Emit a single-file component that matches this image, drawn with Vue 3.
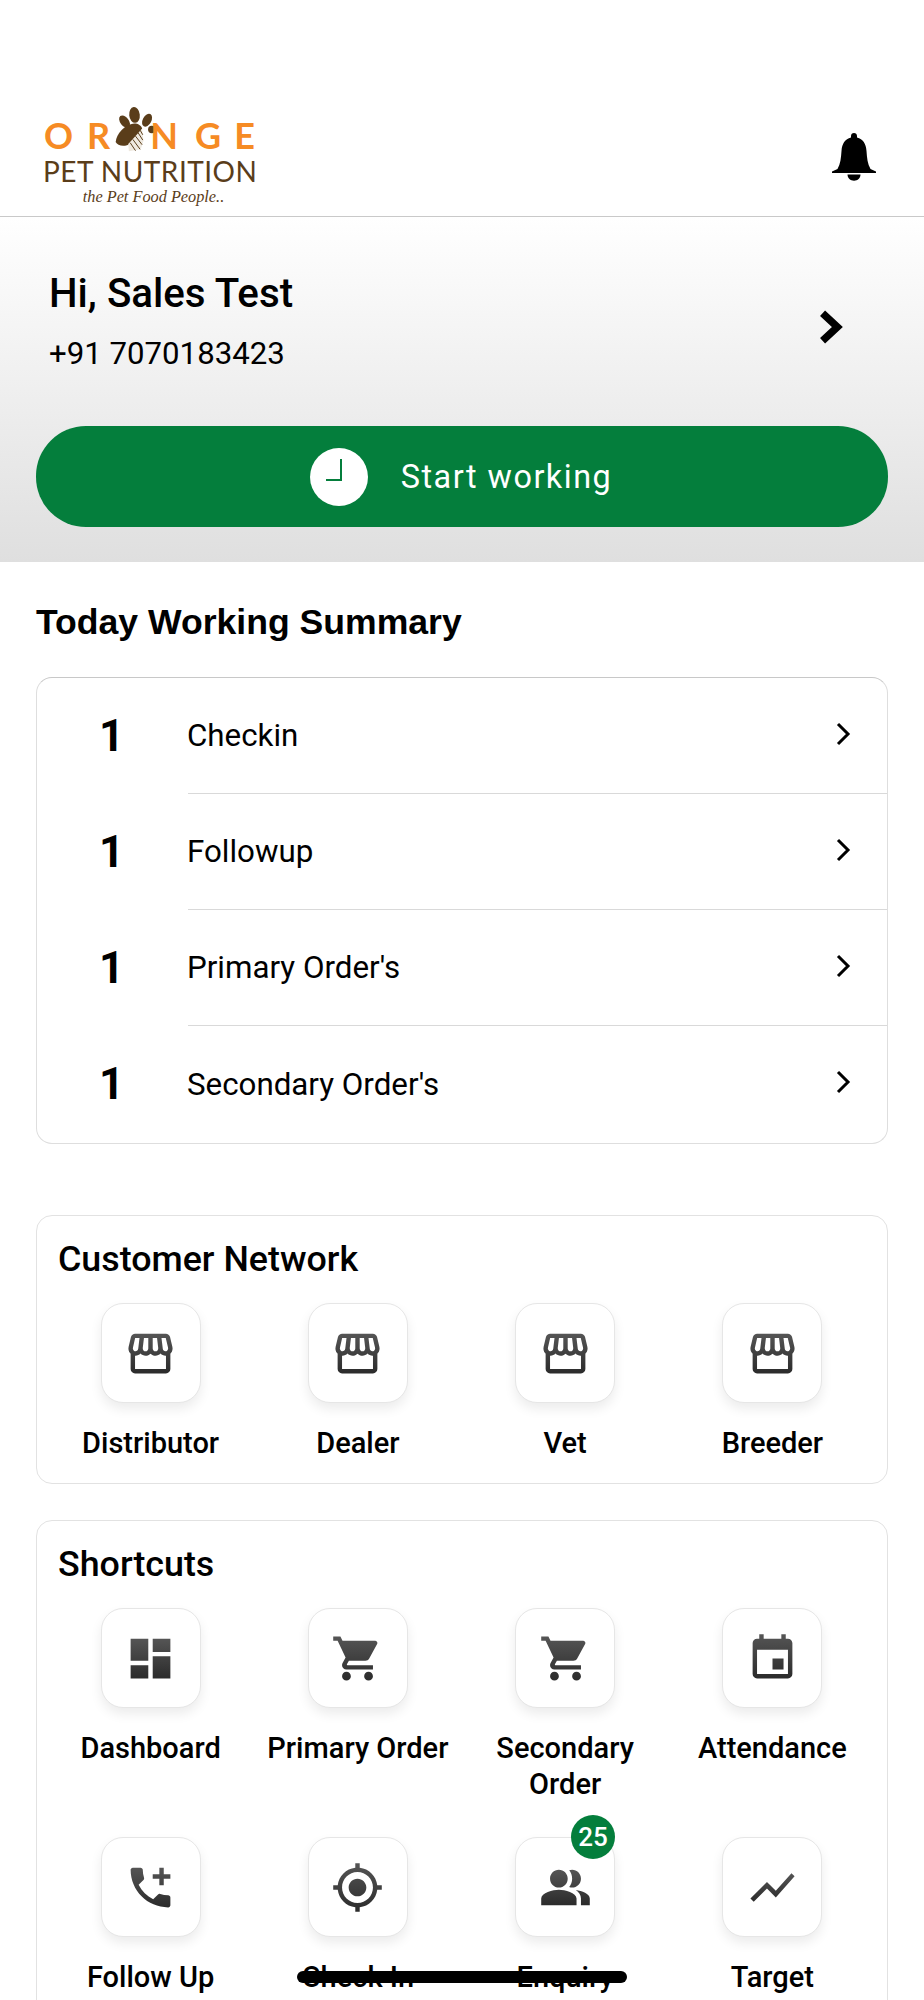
<template>
  <div class="page">
    <svg class="defs" width="0" height="0" aria-hidden="true">
      <defs>
        <linearGradient id="iconFill" x1="0" y1="0" x2="0" y2="1">
          <stop offset="0" stop-color="#555555" />
          <stop offset="1" stop-color="#2b2b2b" />
        </linearGradient>
      </defs>
    </svg>

    <header class="topbar">
      <div class="logo">
        <div class="logo-orange">
          <span class="l-o">O</span>
          <span>R</span>
          <svg class="paw" viewBox="0 0 130 145">
            <ellipse cx="65" cy="30" rx="16" ry="24" fill="#5a3d1a" transform="rotate(-6 65 30)" />
            <ellipse cx="35" cy="50" rx="13" ry="21" fill="#5a3d1a" transform="rotate(-38 35 50)" />
            <ellipse cx="103" cy="46" rx="13" ry="21" fill="#5a3d1a" transform="rotate(28 103 46)" />
            <ellipse cx="117" cy="74" rx="11" ry="11" fill="#5a3d1a" />
            <path d="M64 56 C76 56 86 62 88 72 L54 116 C36 128 14 124 8 112 C10 88 36 58 64 56 Z" fill="#5a3d1a" />
            <path d="M88 72 L92 108 L84 134 L48 140 L46 118 Z" fill="#efe9e0" />
            <path d="M82 76 L90 90 M76 84 L90 106 M68 94 L88 120 M60 104 L82 134 M52 114 L68 138" stroke="#5a3d1a" stroke-width="3" fill="none" />
          </svg>
          <span class="l-n">N</span>
          <span class="l-g">G</span>
          <span>E</span>
        </div>
        <div class="logo-pet">PET NUTRITION</div>
        <div class="logo-tag">the Pet Food People..</div>
      </div>
      <svg class="bell" viewBox="0 0 44 48">
        <path d="M22 0c-1.800 0-3 1.200-3 3v1.600C13 6 10 11 9.500 18c-.5 7-1 13-4 18L0 38.500V40h44v-1.500L38.500 36c-3-5-3.500-11-4-18C34 11 31 6 25 4.600V3c0-1.800-1.200-3-3-3z" fill="#000" />
        <path d="M15.500 41.500h13c0 3.500-2.800 6.200-6.500 6.200s-6.500-2.700-6.500-6.200z" fill="#000" />
      </svg>
    </header>

    <section class="hero">
      <div class="user-row">
        <div>
          <div class="user-name">Hi, Sales Test</div>
          <div class="user-phone">+91 7070183423</div>
        </div>
        <svg class="user-arrow" viewBox="0 0 25 34">
          <path d="M5 4l14 13L5 30" fill="none" stroke="#000" stroke-width="7" />
        </svg>
      </div>
      <div class="start-btn">
        <span class="clock">
          <svg viewBox="0 0 58 58" width="58" height="58">
            <path d="M31 11v21H16" fill="none" stroke="#047e3c" stroke-width="2" />
          </svg>
        </span>
        <span class="start-text">Start working</span>
      </div>
    </section>

    <section class="summary">
      <h2 class="summary-title">Today Working Summary</h2>
      <div class="summary-card">
        <div v-for="row in summary" :key="row" class="summary-row">
          <div class="summary-num">1</div>
          <div class="summary-body">
            <span class="summary-text">{{ row }}</span>
            <svg class="chevron" viewBox="0 0 16 24">
              <path d="M3 2l10 10L3 22" fill="none" stroke="#000" stroke-width="3" />
            </svg>
          </div>
        </div>
      </div>
    </section>

    <section class="panel network">
      <h3 class="panel-title">Customer Network</h3>
      <div class="tiles">
        <div v-for="t in network" :key="t.label" class="tile">
          <div class="tile-box">
            <svg class="tile-icon" viewBox="0 0 24 24"><path :d="icons[t.icon]" fill="url(#iconFill)" /></svg>
          </div>
          <div class="tile-label">{{ t.label }}</div>
        </div>
      </div>
    </section>

    <section class="panel shortcuts">
      <h3 class="panel-title">Shortcuts</h3>
      <div class="tiles">
        <div v-for="t in shortcuts" :key="t.label" class="tile">
          <div class="tile-box">
            <svg class="tile-icon" viewBox="0 0 24 24"><path :d="icons[t.icon]" fill="url(#iconFill)" /></svg>
            <span v-if="t.badge" class="badge">{{ t.badge }}</span>
          </div>
          <div class="tile-label">{{ t.label }}</div>
        </div>
      </div>
    </section>

    <div class="home-bar"></div>
  </div>
</template>

<script setup>
const summary = ['Checkin', 'Followup', "Primary Order's", "Secondary Order's"]

const icons = {
  store: 'M21.9 8.89l-1.05-4.37c-.22-.9-1-1.52-1.91-1.52H5.05c-.9 0-1.69.63-1.9 1.52L2.1 8.89c-.24 1.02-.02 2.06.62 2.88.08.11.19.19.28.29V19c0 1.1.9 2 2 2h14c1.1 0 2-.9 2-2v-6.94c.09-.09.2-.18.28-.28.64-.82.87-1.87.62-2.89zm-2.99-3.9l1.05 4.37c.1.42.01.84-.25 1.17-.14.18-.44.47-.94.47-.61 0-1.14-.49-1.21-1.14L16.98 5l1.93-.01zM13 5h1.96l.54 4.52c.05.39-.07.78-.33 1.07-.22.26-.54.41-.95.41-.67 0-1.22-.59-1.22-1.31V5zM8.49 9.52L9.04 5H11v4.69c0 .72-.55 1.31-1.29 1.31-.34 0-.65-.15-.89-.41-.25-.29-.37-.68-.33-1.07zm-4.45-.16L5.05 5h1.97l-.58 4.86c-.08.65-.6 1.14-1.21 1.14-.49 0-.8-.29-.93-.47-.27-.32-.36-.75-.26-1.17zM5 19v-6.03c.08.01.15.03.23.03.87 0 1.66-.36 2.24-.95.6.6 1.4.95 2.31.95.87 0 1.65-.36 2.23-.93.59.57 1.39.93 2.29.93.84 0 1.64-.35 2.24-.95.58.59 1.37.95 2.24.95.08 0 .15-.02.23-.03V19H5z',
  dashboard: 'M3 13h8V3H3v10zm0 8h8v-6H3v6zm10 0h8V11h-8v10zm0-18v6h8V3h-8z',
  cart: 'M7 18c-1.1 0-1.99.9-1.99 2S5.900 22 7 22s2-.9 2-2-.9-2-2-2zM1 2v2h2l3.600 7.590-1.350 2.450c-.16.280-.25.610-.25.960 0 1.100.9 2 2 2h12v-2H7.420c-.14 0-.25-.11-.25-.25l.03-.12.9-1.630h7.450c.75 0 1.410-.41 1.750-1.030l3.580-6.490c.08-.14.120-.31.120-.48 0-.55-.45-1-1-1H5.210l-.94-2H1zm16 16c-1.100 0-1.990.9-1.990 2s.89 2 1.990 2 2-.9 2-2-.9-2-2-2z',
  event: 'M17 12h-5v5h5v-5zM16 1v2H8V1H6v2H5c-1.110 0-1.990.9-1.990 2L3 19c0 1.100.89 2 2 2h14c1.100 0 2-.9 2-2V5c0-1.100-.9-2-2-2h-1V1h-2zm3 18H5V8h14v11z',
  call: 'M20 15.500c-1.250 0-2.450-.2-3.570-.57-.35-.11-.74-.03-1.020.24l-2.200 2.200c-2.830-1.440-5.150-3.750-6.590-6.590l2.200-2.210c.28-.26.36-.65.25-1C8.700 6.450 8.500 5.250 8.500 4c0-.55-.45-1-1-1H4c-.55 0-1 .45-1 1 0 9.390 7.610 17 17 17 .55 0 1-.45 1-1v-3.500c0-.55-.45-1-1-1zM21 6h-3V3h-2v3h-3v2h3v3h2V8h3z',
  gps: 'M12 8c-2.210 0-4 1.790-4 4s1.790 4 4 4 4-1.790 4-4-1.790-4-4-4zm8.940 3c-.46-4.170-3.770-7.480-7.940-7.940V1h-2v2.060C6.830 3.520 3.520 6.830 3.060 11H1v2h2.060c.46 4.170 3.770 7.480 7.940 7.940V23h2v-2.060c4.170-.46 7.480-3.770 7.940-7.940H23v-2h-2.060zM12 19c-3.870 0-7-3.130-7-7s3.130-7 7-7 7 3.130 7 7-3.130 7-7 7z',
  people: 'M16.670 13.130C18.040 14.060 19 15.320 19 17v3h4v-3c0-2.180-3.570-3.470-6.330-3.870zM15 12c2.210 0 4-1.790 4-4s-1.790-4-4-4c-.47 0-.91.1-1.330.24C14.500 5.270 15 6.580 15 8s-.5 2.730-1.330 3.760c.42.14.86.24 1.330.24zM9 12c2.210 0 4-1.790 4-4s-1.790-4-4-4-4 1.790-4 4 1.790 4 4 4zm0 1c-2.670 0-8 1.340-8 4v3h16v-3c0-2.660-5.330-4-8-4z',
  chart: 'M3.500 18.490l6-6.010 4 4L22 6.920l-1.410-1.410-7.090 7.970-4-4L2 16.990z'
}

const network = [
  { label: 'Distributor', icon: 'store' },
  { label: 'Dealer', icon: 'store' },
  { label: 'Vet', icon: 'store' },
  { label: 'Breeder', icon: 'store' }
]

const shortcuts = [
  { label: 'Dashboard', icon: 'dashboard' },
  { label: 'Primary Order', icon: 'cart' },
  { label: 'Secondary Order', icon: 'cart' },
  { label: 'Attendance', icon: 'event' },
  { label: 'Follow Up', icon: 'call' },
  { label: 'Check In', icon: 'gps' },
  { label: 'Enquiry', icon: 'people', badge: 25 },
  { label: 'Target', icon: 'chart' }
]
</script>

<style>
html, body {
  margin: 0;
  background: #fff;
}
</style>

<style scoped>
.page {
  position: relative;
  width: 924px;
  height: 2000px;
  overflow: hidden;
  background: #fff;
  font-family: Roboto, "Liberation Sans", sans-serif;
  color: #000;
}

.defs {
  position: absolute;
}

.topbar {
  height: 217px;
  box-sizing: border-box;
  padding: 105px 48px 0 43px;
  display: flex;
  justify-content: space-between;
  align-items: flex-start;
  border-bottom: 1px solid #c9c9c9;
}

.logo {
  width: 213px;
  font-family: Lato, "Noto Sans", sans-serif;
}

.logo-orange {
  display: flex;
  align-items: flex-end;
  height: 46px;
  padding-left: 1px;
  font-size: 36px;
  font-weight: 700;
  line-height: 32px;
  color: #f68b24;
}

.l-o {
  margin-right: 14px;
}

.paw {
  width: 43px;
  height: 48px;
  margin: 0 -6px -2px 3px;
  flex-shrink: 0;
}

.l-n {
  margin-right: 17px;
}

.l-g {
  margin-right: 13px;
}

.logo-pet {
  margin-top: 7px;
  font-size: 28px;
  letter-spacing: 0.500px;
  line-height: 26px;
  color: #5a3d1a;
  white-space: nowrap;
}

.logo-tag {
  margin-top: 3px;
  padding-left: 8px;
  text-align: center;
  font-family: "Liberation Serif", serif;
  font-style: italic;
  font-size: 16.300px;
  line-height: 20px;
  color: #5a3d1a;
}

.bell {
  width: 44px;
  height: 48px;
  margin-top: 28px;
}

.hero {
  height: 345px;
  box-sizing: border-box;
  padding: 50px 36px 0;
  background: linear-gradient(180deg, #ffffff 0%, #dfdfdf 100%);
}

.user-row {
  display: flex;
  justify-content: space-between;
  align-items: center;
  padding: 0 44px 0 13px;
  height: 110px;
}

.user-name {
  font-size: 40.300px;
  font-weight: 500;
  line-height: 48px;
}

.user-phone {
  margin-top: 16px;
  font-size: 31.200px;
  line-height: 40px;
}

.user-arrow {
  width: 27px;
  height: 36px;
  margin-top: 10px;
}

.start-btn {
  margin-top: 49px;
  height: 101px;
  border-radius: 50px;
  background: #047e3c;
  display: flex;
  align-items: center;
  justify-content: center;
  gap: 33px;
  padding-right: 2px;
  color: #fff;
}

.clock {
  width: 58px;
  height: 58px;
  border-radius: 50%;
  background: #fff;
  display: block;
}

.clock svg {
  display: block;
}

.start-text {
  font-size: 32.400px;
  letter-spacing: 1.500px;
}

.summary {
  padding: 0 36px;
}

.summary-title {
  margin: 38px 0 0;
  font-family: "Liberation Sans", Arial, sans-serif;
  font-size: 35.600px;
  font-weight: 700;
  line-height: 44px;
}

.summary-card {
  margin-top: 33px;
  height: 467px;
  box-sizing: border-box;
  border: 1px solid #dedede;
  border-top-color: #c8c8c8;
  border-radius: 16px;
}

.summary-row {
  display: flex;
  height: 116px;
}

.summary-num {
  width: 151px;
  box-sizing: border-box;
  padding-right: 2px;
  text-align: center;
  font-size: 44px;
  font-weight: 700;
  line-height: 116px;
}

.summary-body {
  flex: 1;
  display: flex;
  justify-content: space-between;
  align-items: center;
  padding-right: 36px;
  font-size: 31.300px;
  border-bottom: 1px solid #d9d9d9;
}

.summary-text {
  margin-left: -1px;
}

.summary-row:last-child .summary-body {
  border-bottom: none;
}

.chevron {
  width: 16px;
  height: 24px;
  margin-top: -4px;
}

.panel {
  margin: 0 36px;
  box-sizing: border-box;
  border: 1px solid #e2e2e2;
  border-radius: 16px;
  padding: 21px 11px 60px 10px;
}

.network {
  margin-top: 71px;
  height: 269px;
  padding-bottom: 0;
}

.shortcuts {
  margin-top: 36px;
}

.panel-title {
  margin: 0 0 0 11px;
  font-size: 35.800px;
  font-weight: 500;
  line-height: 44px;
}

.tiles {
  display: grid;
  grid-template-columns: repeat(4, 1fr);
  row-gap: 35px;
  margin-top: 22px;
}

.tile {
  display: flex;
  flex-direction: column;
  align-items: center;
}

.tile-box {
  position: relative;
  width: 100px;
  height: 100px;
  box-sizing: border-box;
  border: 1px solid #e6e6e6;
  border-radius: 22px;
  background: #fff;
  box-shadow: 0 6px 12px rgba(0, 0, 0, 0.08);
  display: flex;
  align-items: center;
  justify-content: center;
}

.tile-icon {
  width: 53px;
  height: 53px;
}

.badge {
  position: absolute;
  top: -23px;
  right: -1px;
  width: 44px;
  height: 44px;
  border-radius: 50%;
  background: #047e3c;
  color: #fff;
  font-size: 26px;
  font-weight: 500;
  line-height: 44px;
  text-align: center;
}

.tile-label {
  margin-top: 22px;
  font-size: 29px;
  font-weight: 500;
  line-height: 36px;
  text-align: center;
}

.home-bar {
  position: absolute;
  left: 297px;
  top: 1971px;
  width: 330px;
  height: 12px;
  border-radius: 6px;
  background: #000;
}
</style>
